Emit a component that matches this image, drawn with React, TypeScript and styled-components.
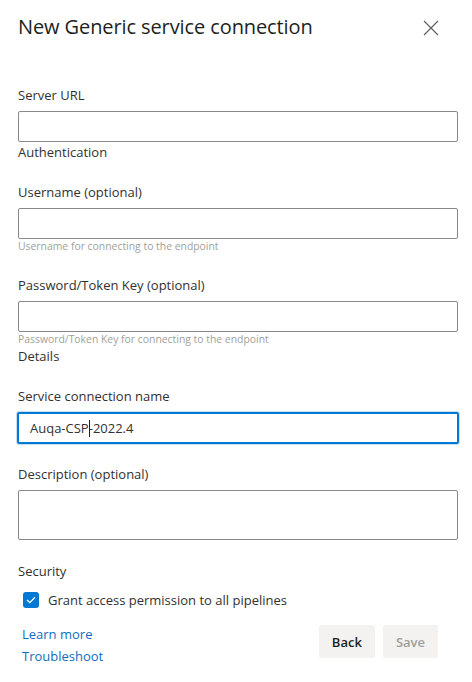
import styled, { createGlobalStyle } from 'styled-components';

const GlobalStyle = createGlobalStyle`
  html, body {
    margin: 0;
    padding: 0;
    background: #ffffff;
  }
  body {
    font-family: "Open Sans", "Noto Sans", Arial, sans-serif;
    color: #201f1e;
  }
`;

const Panel = styled.div`
  width: 472px;
  height: 682px;
  box-sizing: border-box;
  padding: 12px 14px 0 18px;
  background: #ffffff;
`;

const Header = styled.div`
  display: flex;
  align-items: center;
  justify-content: space-between;
  height: 28px;
  margin-bottom: 45px;
`;

const Title = styled.h1`
  margin: 0;
  font-size: 20px;
  font-weight: 400;
  color: #201f1e;
  letter-spacing: -0.1px;
`;

const CloseButton = styled.button`
  display: flex;
  align-items: center;
  justify-content: center;
  width: 28px;
  height: 28px;
  margin: 4px 13px 0 0;
  padding: 0;
  border: none;
  background: transparent;
  color: #605e5c;
  cursor: pointer;
`;

const Field = styled.div<{ gap?: number }>`
  display: flex;
  flex-direction: column;
  margin-top: ${(p) => p.gap ?? 0}px;
`;

const Label = styled.label`
  font-size: 13px;
  line-height: 20px;
  color: #323130;
  margin-bottom: 6px;
`;

const SectionTitle = styled.div<{ gap?: number }>`
  font-size: 13px;
  line-height: 20px;
  color: #323130;
  margin-top: ${(p) => p.gap ?? 0}px;
`;

const TextInput = styled.input`
  box-sizing: border-box;
  width: 440px;
  height: 31px;
  margin: 0;
  padding: 0 11px;
  font-family: inherit;
  font-size: 13px;
  color: #323130;
  border: 1px solid #8a8886;
  border-radius: 2px;
  outline: none;
  background: #ffffff;
`;

const TextArea = styled.textarea`
  box-sizing: border-box;
  width: 440px;
  height: 50px;
  margin: 0;
  padding: 6px 11px;
  font-family: inherit;
  font-size: 13px;
  border: 1px solid #8a8886;
  border-radius: 2px;
  resize: none;
  outline: none;
`;

const Helper = styled.div`
  font-size: 10.4px;
  line-height: 14px;
  color: #a19f9d;
`;

const CheckRow = styled.label`
  display: flex;
  align-items: center;
  gap: 9px;
  margin: 9px 0 0 5px;
  font-size: 13px;
  line-height: 20px;
  color: #323130;
`;

const CheckBox = styled.span`
  display: flex;
  align-items: center;
  justify-content: center;
  width: 16px;
  height: 16px;
  border-radius: 3px;
  background: #0078d4;
`;

const Footer = styled.div`
  display: flex;
  justify-content: space-between;
  align-items: flex-start;
  margin-top: 13px;
  padding: 0 20px 0 4px;
`;

const Links = styled.div`
  display: flex;
  flex-direction: column;
`;

const Link = styled.a`
  font-size: 13px;
  line-height: 22px;
  color: #106ebe;
  text-decoration: none;
  cursor: pointer;
`;

const Buttons = styled.div`
  display: flex;
  gap: 8px;
  margin-top: 2px;
`;

const Button = styled.button<{ disabled?: boolean }>`
  height: 33px;
  padding: 0 13px;
  border: none;
  border-radius: 2px;
  background: #f3f2f1;
  font-family: inherit;
  font-size: 13px;
  font-weight: 600;
  color: ${(p) => (p.disabled ? '#a19f9d' : '#201f1e')};
  cursor: ${(p) => (p.disabled ? 'default' : 'pointer')};
`;

const Caret = styled.span`
  display: inline-block;
  width: 1px;
  height: 17px;
  background: #201f1e;
  vertical-align: middle;
  margin: 0 -1px 0 0;
`;

const FocusedValue = styled.div`
  box-sizing: border-box;
  display: flex;
  align-items: center;
  width: 442px;
  height: 32px;
  margin-left: -1px;
  padding: 0 11px;
  border: 2px solid #0078d4;
  border-radius: 2px;
  box-shadow: 0 0 0 1px #c7e0f4;
  font-size: 13px;
  color: #323130;
`;

export default function App() {
  return (
    <>
      <GlobalStyle />
      <Panel>
        <Header>
          <Title>New Generic service connection</Title>
          <CloseButton aria-label="Close">
            <svg width="16" height="16" viewBox="0 0 16 16">
              <path d="M1 1 L15 15 M15 1 L1 15" stroke="#605e5c" strokeWidth="1.1" fill="none" />
            </svg>
          </CloseButton>
        </Header>

        <Field>
          <Label>Server URL</Label>
          <TextInput />
        </Field>
        <SectionTitle>Authentication</SectionTitle>

        <Field gap={20}>
          <Label>Username (optional)</Label>
          <TextInput />
          <Helper>Username for connecting to the endpoint</Helper>
        </Field>

        <Field gap={22}>
          <Label>Password/Token Key (optional)</Label>
          <TextInput />
          <Helper>Password/Token Key for connecting to the endpoint</Helper>
        </Field>
        <SectionTitle>Details</SectionTitle>

        <Field gap={20}>
          <Label>Service connection name</Label>
          <FocusedValue>
            Auqa-CSP<Caret />-2022.4
          </FocusedValue>
        </Field>

        <Field gap={20}>
          <Label>Description (optional)</Label>
          <TextArea />
        </Field>

        <SectionTitle gap={21}>Security</SectionTitle>
        <CheckRow>
          <CheckBox>
            <svg width="10" height="8" viewBox="0 0 10 8">
              <path d="M1 4 L3.8 6.6 L9 1.2" stroke="#ffffff" strokeWidth="1.3" fill="none" />
            </svg>
          </CheckBox>
          Grant access permission to all pipelines
        </CheckRow>

        <Footer>
          <Links>
            <Link>Learn more</Link>
            <Link>Troubleshoot</Link>
          </Links>
          <Buttons>
            <Button>Back</Button>
            <Button disabled>Save</Button>
          </Buttons>
        </Footer>
      </Panel>
    </>
  );
}
